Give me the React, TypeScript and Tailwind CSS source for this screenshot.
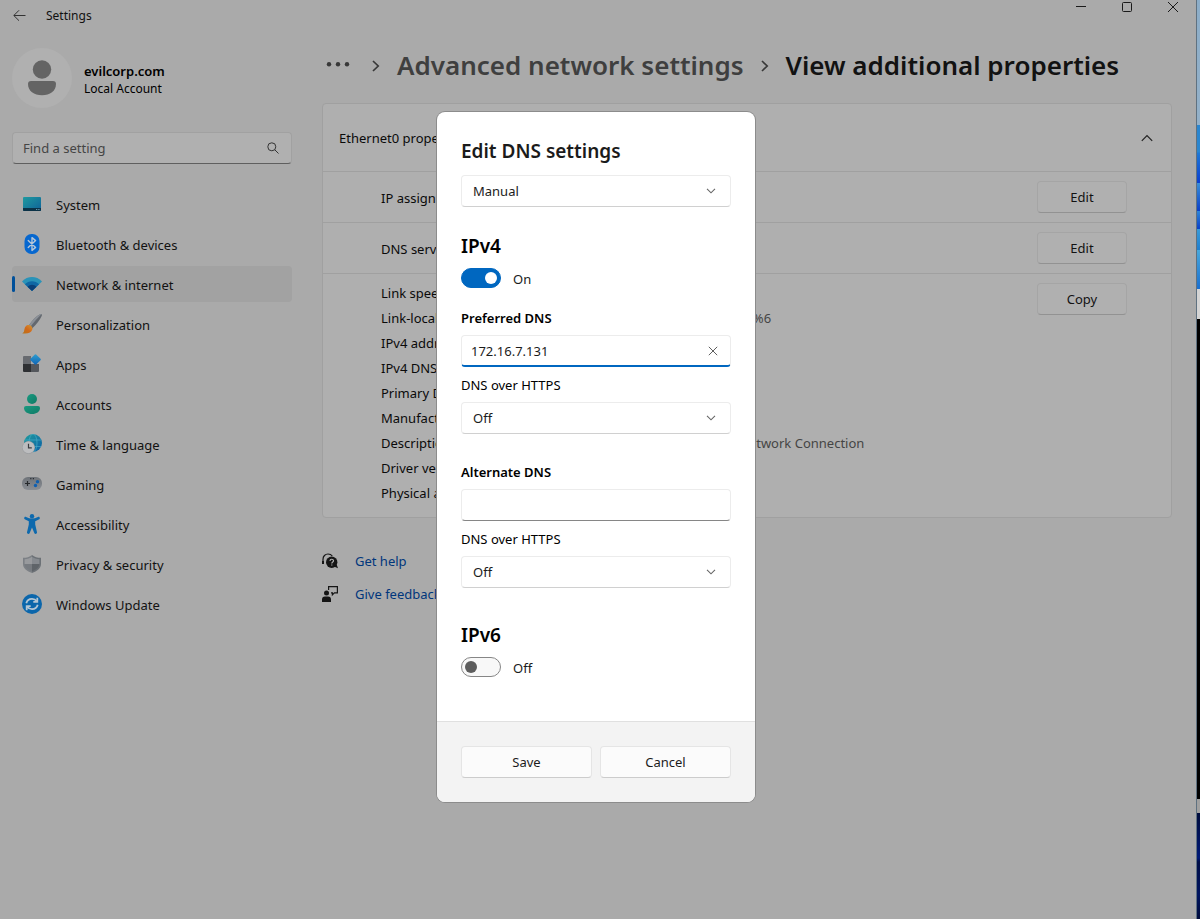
import { useState } from 'react';
import type { ReactNode } from 'react';

function Glyph({ children }: { children: ReactNode }) {
  return (
    <svg viewBox="0 0 20 20" className="size-5 shrink-0" aria-hidden="true">
      {children}
    </svg>
  );
}

const SystemIcon = (
  <Glyph>
    <defs>
      <linearGradient id="sys" x1="0" y1="0" x2="1" y2="1">
        <stop offset="0" stopColor="#1f9aa0" />
        <stop offset="1" stopColor="#0f6198" />
      </linearGradient>
    </defs>
    <rect x="1" y="3" width="18" height="14" rx="1" fill="url(#sys)" />
    <path d="M1 14h18v2a1 1 0 0 1-1 1H2a1 1 0 0 1-1-1z" fill="#0b3247" />
    <path d="M14.2 15h1v1h-1zM16.4 15h1v1h-1z" fill="#7fb0c0" />
  </Glyph>
);

const BluetoothIcon = (
  <Glyph>
    <rect x="2.5" y="0" width="15" height="20" rx="7" fill="#0667cf" />
    <path
      d="M6.2 6.6l7.4 6.8-3.6 3V3.6l3.6 3-7.4 6.8"
      fill="none"
      stroke="#b6c6d8"
      strokeWidth="1.4"
      strokeLinejoin="round"
      strokeLinecap="round"
    />
  </Glyph>
);

const NetworkIcon = (
  <Glyph>
    <path d="M0 7.4C5.6 1.6 14.4 1.6 20 7.4L10 17z" fill="#2a93b8" />
    <path d="M2.9 10.2c3.8-4.1 10.4-4.1 14.2 0L10 17z" fill="#0f67a4" />
    <path d="M5.5 12.7c2.5-2.7 6.5-2.7 9 0L10 17z" fill="#0a3f77" />
  </Glyph>
);

const BrushIcon = (
  <Glyph>
    <defs>
      <linearGradient id="brushTip" x1="0" y1="1" x2="1" y2="0">
        <stop offset="0" stopColor="#b5741a" />
        <stop offset="0.5" stopColor="#d2691a" />
        <stop offset="1" stopColor="#d09a3a" />
      </linearGradient>
    </defs>
    <path d="M7 11.2C10.2 6.3 14.2 2 18.2.2c1.2-.5 2 .4 1.6 1.5-1.9 4.3-5.5 8.900-9.800 12.800z" fill="#63686f" />
    <path d="M7 11.2C10.2 6.3 14.2 2 18.2.2c.5-.2.9-.2 1.2 0C15.5 4 11.7 8.400 8.400 12.700z" fill="#8b9097" />
    <path d="M5.6 11.1c2.7-.9 5.500 1.600 4.700 4.400-.9 3.300-4.800 4.600-10.300 3.700 2.400-.8 1.900-2.200 2.500-4.300.4-1.700 1.500-3.200 3.100-3.800z" fill="url(#brushTip)" />
  </Glyph>
);

const AppsIcon = (
  <Glyph>
    <defs>
      <linearGradient id="appTile" x1="0" y1="0" x2="1" y2="1">
        <stop offset="0" stopColor="#2f9fd0" />
        <stop offset="1" stopColor="#0f62b4" />
      </linearGradient>
    </defs>
    <path d="M1 3a1 1 0 0 1 1-1h7v8H1z" fill="#686b70" />
    <path d="M1 10h8v8H2a1 1 0 0 1-1-1z" fill="#2e3033" />
    <path d="M9 10h8v7a1 1 0 0 1-1 1H9z" fill="#54575c" />
    <rect x="9.500" y="1.500" width="8" height="8" rx=".9" transform="rotate(45 13.500 5.500)" fill="url(#appTile)" />
  </Glyph>
);

const AccountsIcon = (
  <Glyph>
    <defs>
      <linearGradient id="acct" x1="0" y1="0" x2="1" y2="1">
        <stop offset="0" stopColor="#1a9a80" />
        <stop offset="1" stopColor="#0f7a66" />
      </linearGradient>
    </defs>
    <circle cx="10" cy="5" r="5" fill="url(#acct)" />
    <path d="M4 12h12a2 2 0 0 1 2 2c0 3.700-3.600 6-8 6s-8-2.300-8-6a2 2 0 0 1 2-2z" fill="url(#acct)" />
  </Glyph>
);

const TimeIcon = (
  <Glyph>
    <defs>
      <linearGradient id="globe" x1="0" y1="0" x2="1" y2="1">
        <stop offset="0" stopColor="#1f9c9c" />
        <stop offset="1" stopColor="#0c5fa6" />
      </linearGradient>
    </defs>
    <circle cx="11" cy="9" r="9" fill="url(#globe)" />
    <g fill="none" stroke="#4fb2cc" strokeWidth=".6">
      <ellipse cx="11" cy="9" rx="4" ry="9" />
      <path d="M3 6h16M3 12.500h16" />
    </g>
    <circle cx="6.500" cy="13.500" r="6.500" fill="#9b9da0" />
    <circle cx="6.500" cy="13.300" r="5.900" fill="#bcbdbf" />
    <path d="M6.500 9.700v4.200h3.300" fill="none" stroke="#3a3c40" strokeWidth="1.200" />
  </Glyph>
);

const GamingIcon = (
  <Glyph>
    <defs>
      <linearGradient id="pad" x1="0" y1="0" x2="0" y2="1">
        <stop offset="0" stopColor="#6d7278" />
        <stop offset="1" stopColor="#8a8e94" />
      </linearGradient>
    </defs>
    <rect x="0" y="3" width="20" height="13" rx="6" fill="url(#pad)" />
    <path d="M3 9.500h5M5.500 7v5" stroke="#26292c" strokeWidth="1.200" />
    <path d="M8.200 4h1.200v1.200H8.200zM10.800 4H12v1.200h-1.200z" fill="#2b2e32" />
    <circle cx="15.500" cy="7.700" r="1.700" fill="#0f5fb0" />
    <circle cx="13.500" cy="11.500" r="1.700" fill="#0f5fb0" />
  </Glyph>
);

const AccessibilityIcon = (
  <Glyph>
    <circle cx="10" cy="2.200" r="2.200" fill="#0d69ad" />
    <path
      d="M2.500 3.200c-.7 1-.3 2 .7 2.400l3.600 1.600v3.300L5 18.200c-.3 1.700 2 2.500 2.700.9L10 13.400l2.300 5.700c.7 1.600 3 .8 2.700-.9l-1.800-7.700V7.200l3.600-1.600c1-.4 1.400-1.400.7-2.400-.4-.5-1-.5-1.600-.2-3.900 2-7.900 2-11.800 0-.6-.3-1.200-.3-1.600.2z"
      fill="#0d69ad"
    />
  </Glyph>
);

const ShieldIcon = (
  <Glyph>
    <path d="M10 .9c2.500 2 5.400 2.900 9 2.900v6c0 4.700-4 7.600-9 9.300z" fill="#6c7176" />
    <path d="M10 .9C7.500 2.900 4.600 3.800 1 3.800v6c0 4.700 4 7.600 9 9.300z" fill="#7c8085" />
    <path d="M10 2.800c2 1.500 4.600 2.300 7.400 2.400v4.900H10z" fill="#868a8f" />
    <path d="M10 2.800C8 4.300 5.400 5.100 2.600 5.200v4.900H10z" fill="#989a9d" />
    <path d="M10 10.100h7.400c-.2 3.600-3.400 5.900-7.400 7.300z" fill="#5f6469" />
    <path d="M10 10.100H2.600c.2 3.600 3.400 5.900 7.400 7.300z" fill="#777b80" />
  </Glyph>
);

const UpdateIcon = (
  <Glyph>
    <circle cx="10" cy="10" r="10" fill="#0b66ab" />
    <g fill="none" stroke="#b4c6d4" strokeWidth="1.800">
      <path d="M4.300 9.200C5 6.500 7.200 4.800 10 4.800c2 0 3.700.8 4.800 2.400" />
      <path d="M15.700 10.800c-.7 2.700-2.900 4.400-5.700 4.400-2 0-3.700-.8-4.800-2.400" />
      <path d="M15.300 3.800v4h-4M4.700 16.200v-4h4" />
    </g>
  </Glyph>
);

const navItems = [
  { label: 'System', icon: SystemIcon },
  { label: 'Bluetooth & devices', icon: BluetoothIcon },
  { label: 'Network & internet', icon: NetworkIcon, current: true },
  { label: 'Personalization', icon: BrushIcon },
  { label: 'Apps', icon: AppsIcon },
  { label: 'Accounts', icon: AccountsIcon },
  { label: 'Time & language', icon: TimeIcon },
  { label: 'Gaming', icon: GamingIcon },
  { label: 'Accessibility', icon: AccessibilityIcon },
  { label: 'Privacy & security', icon: ShieldIcon },
  { label: 'Windows Update', icon: UpdateIcon },
];

const properties = [
  ['Link speed (Receive/Transmit):', '1000/1000 (Mbps)'],
  ['Link-local IPv6 address:', 'fe80::4c1d:98a2:477e:b1d%6'],
  ['IPv4 address:', '172.16.7.132'],
  ['IPv4 DNS servers:', '172.16.7.2'],
  ['Primary DNS suffix:', 'localdomain'],
  ['Manufacturer:', 'Intel Corporation'],
  ['Description:', 'Intel(R) 82574L Gigabit Network Connection'],
  ['Driver version:', '12.18.9.23'],
  ['Physical address (MAC):', '00-0C-29-5E-1A'],
];

function TitleBar() {
  return (
    <header className="flex h-8 justify-between">
      <div className="flex items-center gap-5 pl-[13px] text-xs text-[#111]">
        <button type="button" aria-label="Back">
          <svg viewBox="0 0 13 12" className="h-3 w-[13px]" fill="none" stroke="#333" strokeWidth="1">
            <path d="M12.500 5.500H1M6 .3L.8 5.500 6 10.700" />
          </svg>
        </button>
        <span>Settings</span>
      </div>
      <div className="flex h-[14px]">
        <button type="button" aria-label="Minimize" className="flex w-[46px] items-center justify-center">
          <svg viewBox="0 0 10 10" className="size-[10px]" stroke="#1a1a1a" fill="none">
            <path d="M0 4.500h10" />
          </svg>
        </button>
        <button type="button" aria-label="Maximize" className="flex w-[46px] items-center justify-center">
          <svg viewBox="0 0 10 10" className="size-[10px]" stroke="#1a1a1a" fill="none">
            <rect x=".5" y=".5" width="9" height="9" rx="1" />
          </svg>
        </button>
        <button type="button" aria-label="Close" className="flex w-[46px] items-center justify-center">
          <svg viewBox="0 0 10 10" className="size-[10px]" stroke="#1a1a1a" fill="none">
            <path d="M0 0l10 10M10 0L0 10" />
          </svg>
        </button>
      </div>
    </header>
  );
}

function Sidebar() {
  return (
    <aside className="w-[280px] shrink-0 pt-4">
      <div className="flex items-center gap-3">
        <div className="flex size-[60px] items-center justify-center rounded-full bg-[#b0b0b0]">
          <svg viewBox="0 0 30 36" className="h-9 w-[30px]" fill="#646464" aria-hidden="true">
            <circle cx="15" cy="9.500" r="9.200" />
            <path d="M4 21h22a3 3 0 0 1 3 3c0 7-6 11.300-14 11.300S1 31 1 24a3 3 0 0 1 3-3z" />
          </svg>
        </div>
        <div className="pt-0.5 text-black">
          <p className="text-[13px] leading-5 font-semibold">evilcorp.com</p>
          <p className="text-xs leading-4">Local Account</p>
        </div>
      </div>

      <label className="mt-6 flex h-8 items-center rounded border border-[#a1a1a1] border-b-[#5f5f5f] bg-[#b0b0b0] pr-3 pl-[10px]">
        <input
          type="search"
          aria-label="Find a setting"
          placeholder="Find a setting"
          className="min-w-0 flex-1 bg-transparent pt-0.5 text-[13px] outline-none placeholder:text-[#454545]"
        />
        <svg viewBox="0 0 12 12" className="size-3" fill="none" stroke="#333" strokeWidth="1" aria-hidden="true">
          <circle cx="4.800" cy="4.800" r="4" />
          <path d="M7.700 7.700l3.800 3.800" />
        </svg>
      </label>

      <nav aria-label="Settings" className="mt-[22px]">
        <ul className="flex flex-col gap-1">
          {navItems.map((item) => (
            <li key={item.label} className="relative">
              {item.current && <span className="absolute top-[10px] left-0 h-4 w-[3px] rounded-full bg-[#00509a]" />}
              <a
                href="#"
                aria-current={item.current ? 'page' : undefined}
                className={
                  item.current
                    ? 'flex h-9 items-center gap-[14px] rounded bg-[#a2a2a2] pl-[10px] text-[13px] text-[#121212]'
                    : 'flex h-9 items-center gap-[14px] rounded pl-[10px] text-[13px] text-[#121212]'
                }
              >
                {item.icon}
                <span className="pt-1">{item.label}</span>
              </a>
            </li>
          ))}
        </ul>
      </nav>
    </aside>
  );
}

function Crumb() {
  return (
    <svg viewBox="0 0 8 12" className="h-3 w-2 shrink-0" fill="none" stroke="#383838" strokeWidth="1.700" aria-hidden="true">
      <path d="M1 1l5.200 5L1 11" />
    </svg>
  );
}

function CardButton({ children }: { children: ReactNode }) {
  return (
    <button
      type="button"
      className="h-8 w-[90px] rounded border border-[#a5a5a5] border-b-[#929292] bg-[#b0b0b0] pt-px text-[13px] text-[#121212]"
    >
      {children}
    </button>
  );
}

function Content() {
  return (
    <main className="min-w-0 flex-1">
      <nav aria-label="Breadcrumb" className="flex h-[68px] items-center pl-1 text-[26px] leading-9 font-semibold whitespace-nowrap">
        <a href="#" aria-label="More" className="mr-[22px]">
          <svg viewBox="0 0 24 8" className="h-2 w-6" fill="#383838">
            <circle cx="3" cy="2.300" r="2.200" />
            <circle cx="12" cy="2.300" r="2.200" />
            <circle cx="21" cy="2.300" r="2.200" />
          </svg>
        </a>
        <Crumb />
        <a href="#" className="ml-[17px] pb-0.5 text-[#3f3f3f]">
          Advanced network settings
        </a>
        <span className="mx-[17px] flex">
          <Crumb />
        </span>
        <h1 className="pb-0.5 text-[#121212]">View additional properties</h1>
      </nav>

      <section className="mt-[3px] rounded border border-[#a0a0a0] bg-[#afafaf] text-[13px] text-[#0a0a0a]">
        <h2>
          <button type="button" aria-expanded="true" className="flex h-[67px] w-full items-center justify-between pr-[18px] pl-4 text-left">
            <span className="pt-0.5">Ethernet0 properties</span>
            <svg viewBox="0 0 12 8" className="h-2 w-3" fill="none" stroke="#222" strokeWidth="1.200">
              <path d="M.8 6.800L6 1.500l5.200 5.300" />
            </svg>
          </button>
        </h2>
        <div className="flex h-[51px] items-center justify-between border-t border-[#a0a0a0] pr-11 pl-[58px]">
          <span className="pt-1">IP assignment:</span>
          <CardButton>Edit</CardButton>
        </div>
        <div className="flex h-[51px] items-center justify-between border-t border-[#a0a0a0] pr-11 pl-[58px]">
          <span className="pt-1">DNS server assignment:</span>
          <CardButton>Edit</CardButton>
        </div>
        <div className="flex items-start justify-between border-t border-[#a0a0a0] pt-[9px] pr-11 pb-[11px] pl-[58px]">
          <dl className="-mt-0.5 leading-[25px]">
            {properties.map(([name, value]) => (
              <div key={name} className="grid grid-cols-[216px_auto] whitespace-nowrap">
                <dt>{name}</dt>
                <dd className="text-[#454545]">{value}</dd>
              </div>
            ))}
          </dl>
          <CardButton>Copy</CardButton>
        </div>
      </section>

      <div className="mt-[33px] flex flex-col gap-[13px] text-[13px] leading-5 text-[#00367c]">
        <a href="#" className="flex items-center gap-[17px]">
          <svg viewBox="0 0 16 16" className="size-4" aria-hidden="true">
            <path d="M1 10.500V6.200C1 3.200 3.200 1 6 1c1.900 0 3.300.7 4.300 2" fill="none" stroke="#151515" strokeWidth="1.200" />
            <path d="M0 8h2v3H0z" fill="#151515" />
            <circle cx="9.700" cy="9.300" r="5.700" fill="#151515" />
            <path d="M12 13.500l4 1.800-1.500-4z" fill="#151515" />
            <path d="M8 8c0-2.300 3.500-2.300 3.500-.2 0 1.300-1.700 1.300-1.700 2.700M9.800 11.400v1.200" fill="none" stroke="#b0b0b0" strokeWidth="1.200" />
          </svg>
          Get help
        </a>
        <a href="#" className="flex items-center gap-[17px]">
          <svg viewBox="0 0 16 16" className="size-4" aria-hidden="true">
            <circle cx="4.500" cy="7" r="2.500" fill="#151515" />
            <path d="M0 16v-2.500A3 3 0 0 1 3 10.500h3a3 3 0 0 1 3 3V16z" fill="#151515" />
            <path d="M6.600 4V.6h8.800v6.300h-3l-2 2v-2H9" fill="none" stroke="#151515" strokeWidth="1.200" />
          </svg>
          Give feedback
        </a>
      </div>
    </main>
  );
}

function Dropdown({ id, label, options }: { id: string; label?: string; options: string[] }) {
  return (
    <div className="relative">
      <select
        id={id}
        aria-label={label}
        className="block h-8 w-full appearance-none rounded border border-[#ececec] border-b-[#d0d0d0] bg-white pl-[11px] text-[13px] text-[#1b1b1b]"
      >
        {options.map((o) => (
          <option key={o}>{o}</option>
        ))}
      </select>
      <svg
        viewBox="0 0 10 6"
        className="pointer-events-none absolute top-[13px] right-[15px] h-1.5 w-[10px]"
        fill="none"
        stroke="#666"
        strokeWidth="1.100"
        aria-hidden="true"
      >
        <path d="M1 .8l4 4 4-4" />
      </svg>
    </div>
  );
}

function Toggle({ label, on, onChange }: { label: string; on: boolean; onChange: (v: boolean) => void }) {
  return (
    <label className="mt-2 flex h-5 items-center gap-3 text-[13px] text-[#1b1b1b]">
      <input
        type="checkbox"
        role="switch"
        aria-label={label}
        checked={on}
        onChange={(e) => onChange(e.target.checked)}
        className="flex h-5 w-10 appearance-none items-center rounded-full border border-[#868686] bg-[#f8f8f8] px-[3px] before:size-3 before:rounded-full before:bg-[#5d5d5d] before:content-[''] checked:justify-end checked:border-[#0067c0] checked:bg-[#0067c0] checked:before:bg-white"
      />
      <span className="pt-0.5">{on ? 'On' : 'Off'}</span>
    </label>
  );
}

function DnsDialog() {
  const [ipv4, setIpv4] = useState(true);
  const [ipv6, setIpv6] = useState(false);
  const [preferred, setPreferred] = useState('172.16.7.131');
  const [alternate, setAlternate] = useState('');

  return (
    <div
      role="dialog"
      aria-modal="true"
      aria-labelledby="dns-title"
      className="w-[318px] overflow-hidden rounded-lg bg-white text-[13px] leading-5 text-black ring-1 ring-[#8c8c8c]"
    >
      <div className="px-6 pt-6 pb-11">
        <h2 id="dns-title" className="mb-[9px] text-[19px] leading-[30px] font-semibold text-[#1b1b1b]">
          Edit DNS settings
        </h2>
        <Dropdown id="mode" label="DNS mode" options={['Manual', 'Automatic (DHCP)']} />

        <h3 className="mt-[25px] text-[19px] leading-7 font-semibold">IPv4</h3>
        <Toggle label="IPv4" on={ipv4} onChange={setIpv4} />

        <label htmlFor="preferred" className="mt-5 mb-[7px] block font-semibold">
          Preferred DNS
        </label>
        <div className="flex h-8 items-center overflow-hidden rounded border border-[#ececec] border-b-2 border-b-[#0067c0] pr-3 pl-[9px]">
          <input
            id="preferred"
            value={preferred}
            onChange={(e) => setPreferred(e.target.value)}
            className="min-w-0 flex-1 text-[#1b1b1b] outline-none"
          />
          <button type="button" aria-label="Clear" onClick={() => setPreferred('')}>
            <svg viewBox="0 0 10 10" className="size-[10px]" fill="none" stroke="#5f5f5f" strokeWidth="1">
              <path d="M.8.8l8.400 8.400M9.200.8L.8 9.200" />
            </svg>
          </button>
        </div>
        <label htmlFor="doh1" className="mt-2 mb-[7px] block">
          DNS over HTTPS
        </label>
        <Dropdown id="doh1" options={['Off', 'On']} />

        <label htmlFor="alternate" className="mt-7 mb-[7px] block font-semibold">
          Alternate DNS
        </label>
        <input
          id="alternate"
          value={alternate}
          onChange={(e) => setAlternate(e.target.value)}
          className="block h-8 w-full rounded border border-[#ececec] border-b-[#868686] px-[10px] outline-none"
        />
        <label htmlFor="doh2" className="mt-2 mb-[7px] block">
          DNS over HTTPS
        </label>
        <Dropdown id="doh2" options={['Off', 'On']} />

        <h3 className="mt-[33px] text-[19px] leading-7 font-semibold">IPv6</h3>
        <Toggle label="IPv6" on={ipv6} onChange={setIpv6} />
      </div>
      <div className="flex gap-2 border-t border-[#e0e0e0] bg-[#f3f3f3] p-6">
        <button type="button" className="h-8 flex-1 rounded border border-[#e5e5e5] border-b-[#cccccc] bg-[#fbfbfb] text-[#1b1b1b]">
          Save
        </button>
        <button type="button" className="h-8 flex-1 rounded border border-[#e5e5e5] border-b-[#cccccc] bg-[#fbfbfb] text-[#1b1b1b]">
          Cancel
        </button>
      </div>
    </div>
  );
}

export default function App() {
  return (
    <div className="flex min-h-screen overflow-hidden font-['Noto_Sans','Open_Sans',sans-serif]">
      <div className="relative min-w-0 flex-1 bg-[#aaaaaa]">
        <TitleBar />
        <div className="flex gap-[30px] pr-6 pl-3">
          <Sidebar />
          <Content />
        </div>
        <div className="absolute inset-0 flex items-start justify-center pt-28 pr-1">
          <DnsDialog />
        </div>
      </div>
      <div className="w-1 shrink-0 border-l border-[#5f7180] bg-[linear-gradient(to_bottom,#8cadc8_0px,#93b0c8_125px,#2a86d0_125px,#2a86d0_152px,#1f78d6_153px,#0a3fd0_183px,#3a8fd8_183px,#0a3fc8_211px,#2f86d8_211px,#0a40c8_229px,#3a9bd8_229px,#1f7fd0_250px,#48a8dc_250px,#1a6fd0_289px,#d4d4d4_289px,#d4d4d4_319px,#000_319px,#000_799px,#a0a0a0_799px,#a0a0a0_813px,#000c3c_813px,#001a78_858px,#000e48_862px,#001560_895px,#000c3c_919px)]" />
    </div>
  );
}
